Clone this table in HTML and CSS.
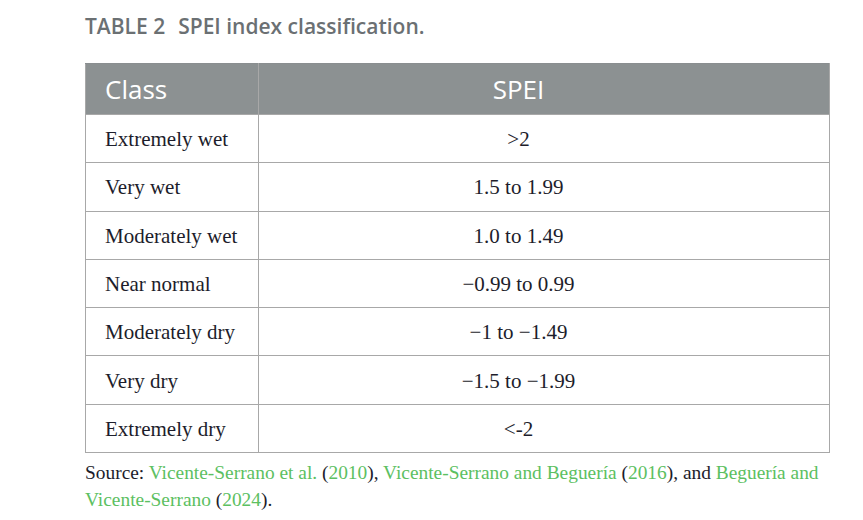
FILE: index.html
```html
<!DOCTYPE html>
<html lang="en">
<head>
<meta charset="utf-8">
<title>TABLE 2 SPEI index classification</title>
<link rel="stylesheet" href="styles.css">
</head>
<body>
<div class="page">
  <h2 class="caption"><span class="label">TABLE 2</span><span class="title">SPEI index classification.</span></h2>
  <table class="spei">
    <thead>
      <tr><th class="c1">Class</th><th class="c2">SPEI</th></tr>
    </thead>
    <tbody>
      <tr><td class="c1">Extremely wet</td><td class="c2">&gt;2</td></tr>
      <tr><td class="c1">Very wet</td><td class="c2">1.5 to 1.99</td></tr>
      <tr><td class="c1">Moderately wet</td><td class="c2">1.0 to 1.49</td></tr>
      <tr><td class="c1">Near normal</td><td class="c2">&minus;0.99 to 0.99</td></tr>
      <tr><td class="c1">Moderately dry</td><td class="c2">&minus;1 to &minus;1.49</td></tr>
      <tr><td class="c1">Very dry</td><td class="c2">&minus;1.5 to &minus;1.99</td></tr>
      <tr><td class="c1">Extremely dry</td><td class="c2">&lt;-2</td></tr>
    </tbody>
  </table>
  <p class="source">Source: <a href="#">Vicente-Serrano et al.</a> (<a href="#">2010</a>), <a href="#">Vicente-Serrano and Beguería</a> (<a href="#">2016</a>), and <a href="#">Beguería and</a> <a href="#">Vicente-Serrano</a> (<a href="#">2024</a>).</p>
</div>
</body>
</html>
```
FILE: styles.css
```css
html, body {
  margin: 0;
  padding: 0;
  background: #ffffff;
}
.page {
  padding: 11px 34px 0 85px;
  width: 745px;
}
.caption {
  margin: 0 0 22px 0;
  font-family: "Open Sans", "Liberation Sans", sans-serif;
  font-weight: 600;
  font-size: 21px;
  line-height: 30px;
  color: #6b7073;
}
.caption .label {
  margin-right: 13px;
}
.spei {
  width: 745px;
  border-collapse: collapse;
  border: 1px solid #a8a8a8;
  font-family: "Liberation Serif", serif;
  font-size: 21px;
  color: #1d1d2b;
}
.spei th {
  background: #8c9192;
  color: #ffffff;
  font-family: "Open Sans", "Liberation Sans", sans-serif;
  font-weight: 400;
  font-size: 26px;
  height: 50px;
  padding: 0;
  border: 1px solid #a8a8a8;
  border-top-color: #8a8e90;
}
.spei td {
  height: 45.3px;
  padding: 2px 0 0 0;
  border: 1px solid #a8a8a8;
}
.spei .c1 {
  width: 153px;
  text-align: left;
  padding-left: 19px;
}
.spei .c2 {
  text-align: center;
  padding-right: 51px;
}
.source {
  margin: 6px 0 0 0;
  font-family: "Liberation Serif", serif;
  font-size: 19.4px;
  line-height: 27px;
  color: #1d1d2b;
}
.source a {
  color: #5cc061;
  text-decoration: none;
}
```
